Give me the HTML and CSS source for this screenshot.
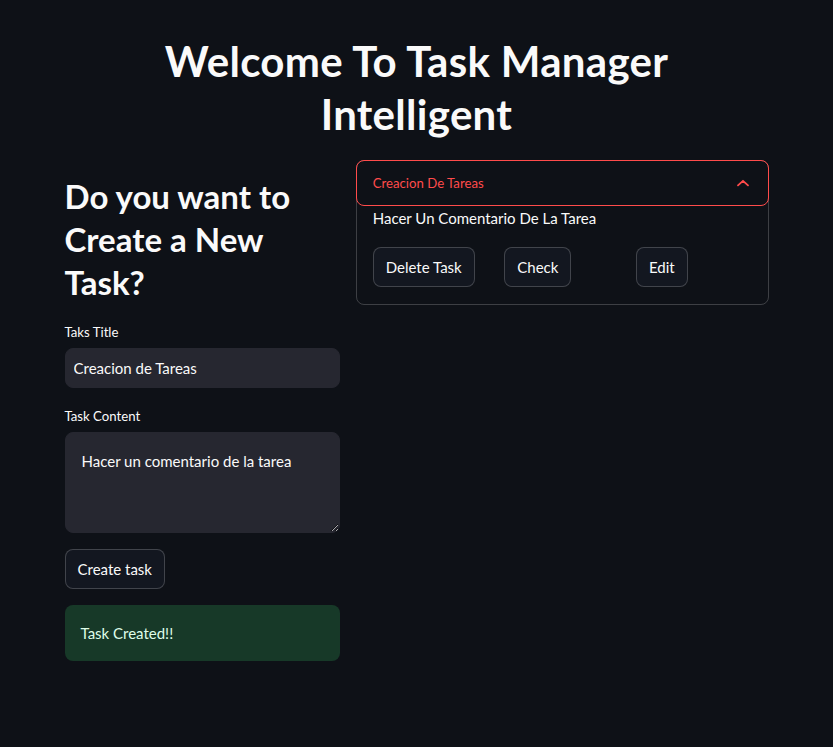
FILE: index.html
```html
<!DOCTYPE html>
<html lang="en">
<head>
<meta charset="utf-8">
<title>Task Manager</title>
<link rel="stylesheet" href="styles.css">
</head>
<body>
<main class="main">
  <h1 class="title">Welcome To Task Manager Intelligent</h1>
  <div class="columns">
    <section class="col col-left">
      <h2 class="subtitle">Do you want to Create a New Task?</h2>
      <div class="widget">
        <label class="label" for="title">Taks Title</label>
        <input class="input" id="title" type="text" value="Creacion de Tareas">
      </div>
      <div class="widget">
        <label class="label" for="content">Task Content</label>
        <textarea class="textarea" id="content">Hacer un comentario de la tarea</textarea>
      </div>
      <div class="widget">
        <button class="btn">Create task</button>
      </div>
      <div class="widget">
        <div class="alert">Task Created!!</div>
      </div>
    </section>
    <section class="col col-right">
      <div class="expander">
        <div class="exp-head">
          <span>Creacion De Tareas</span>
          <svg class="chev" width="12" height="8" viewBox="0 0 12 8"><path d="M1 6.3 L6 1.8 L11 6.3" fill="none" stroke="#ff4b4b" stroke-width="1.8" stroke-linecap="round" stroke-linejoin="round"/></svg>
        </div>
        <div class="exp-body">
          <p class="exp-text">Hacer Un Comentario De La Tarea</p>
          <div class="btn-row">
            <div class="btn-col"><button class="btn">Delete Task</button></div>
            <div class="btn-col"><button class="btn">Check</button></div>
            <div class="btn-col"><button class="btn">Edit</button></div>
          </div>
        </div>
      </div>
    </section>
  </div>
</main>
</body>
</html>
```
FILE: styles.css
```css
* { box-sizing: border-box; }
html, body {
  margin: 0;
  background: #0e1117;
  color: #fafafa;
  font-family: Lato, "Noto Sans", "Liberation Sans", sans-serif;
}
.main {
  max-width: 736px;
  margin: 0 auto;
  padding: 35px 16px 40px;
}
.title {
  margin: 0;
  font-size: 42px;
  font-weight: 700;
  line-height: 53px;
  letter-spacing: 0.3px;
  text-align: center;
  padding: 0 0 19px;
}
.columns {
  display: flex;
  gap: 16px;
  align-items: flex-start;
}
.col-left { flex: 2 1 0; min-width: 0; display: flex; flex-direction: column; gap: 16px; }
.col-right { flex: 3 1 0; min-width: 0; }
.subtitle {
  margin: 0;
  font-size: 33px;
  font-weight: 700;
  line-height: 43px;
  padding: 15px 0 0;
}
.widget { display: flex; flex-direction: column; }
.label {
  font-size: 13.2px;
  line-height: 24px;
  margin-bottom: 4px;
}
.input {
  height: 40px;
  border: 1px solid #262730;
  border-radius: 8px;
  background: #262730;
  color: #fafafa;
  font: inherit;
  font-size: 15px;
  padding: 0 8px;
  outline: none;
}
.textarea {
  height: 101px;
  border: 1px solid #262730;
  border-radius: 8px;
  background: #262730;
  color: #fafafa;
  font: inherit;
  font-size: 15px;
  line-height: 1.6;
  padding: 16px 16px;
  outline: none;
  resize: vertical;
}
.btn {
  align-self: flex-start;
  height: 40px;
  padding: 0 12px;
  border: 1px solid rgba(250,250,250,0.2);
  border-radius: 8px;
  background: #131720;
  color: #fafafa;
  font: inherit;
  font-size: 15px;
}
.alert {
  background: #173928;
  color: #dffde9;
  border-radius: 8px;
  padding: 16px;
  font-size: 15px;
  line-height: 24px;
}
.expander {
  border: 1px solid rgba(250,250,250,0.2);
  border-radius: 8px;
}
.exp-head {
  height: 46px;
  margin: -1px;
  border: 1px solid #ff4b4b;
  border-radius: 8px;
  display: flex;
  align-items: center;
  justify-content: space-between;
  padding: 0 19px 0 16px;
  color: #ff4b4b;
  font-size: 13.2px;
}
.chev { display: block; }
.exp-body { padding: 0 16px 17px; }
.exp-text {
  margin: 0 0 16px;
  font-size: 15px;
  line-height: 26px;
}
.btn-row { display: flex; gap: 16px; }
.btn-col { flex: 1 1 0; min-width: 0; display: flex; }
```
